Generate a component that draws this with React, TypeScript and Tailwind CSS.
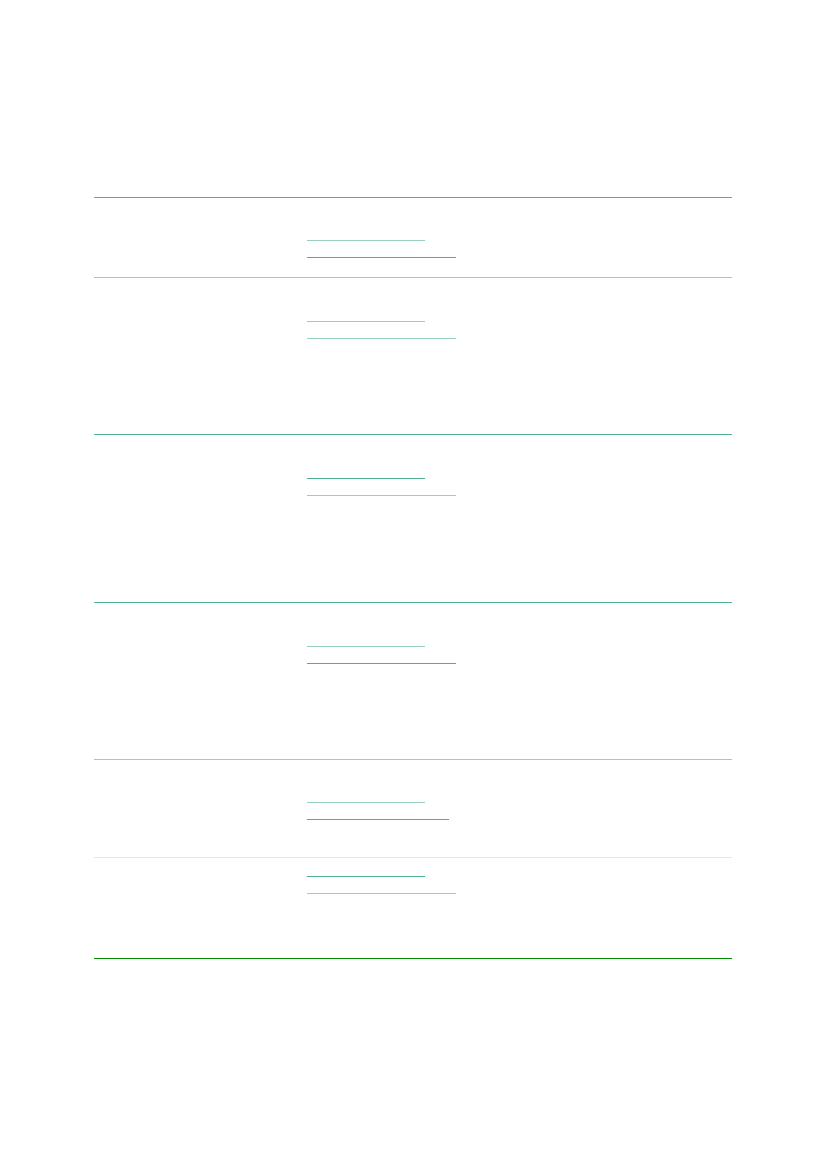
import React from "react"

type Row = {
  h: string
  pt: string
  border: string
  first: string
  second: string
  secondW: string
}

const rows: Row[] = [
  { h: "h-[80px]", pt: "pt-[42px]", border: "border-[#97cfbd]", first: "bg-[#97cfbd]", second: "bg-[#52ae95]", secondW: "w-[149px]" },
  { h: "h-[157px]", pt: "pt-[43px]", border: "border-[#52ae95]", first: "bg-[#97cfbd]", second: "bg-[#97cfbd]", secondW: "w-[149px]" },
  { h: "h-[168px]", pt: "pt-[43px]", border: "border-[#52ae95]", first: "bg-[#52ae95]", second: "bg-[#97cfbd]", secondW: "w-[149px]" },
  { h: "h-[157px]", pt: "pt-[43px]", border: "border-[#97cfbd]", first: "bg-[#97cfbd]", second: "bg-[#52ae95]", secondW: "w-[149px]" },
  { h: "h-[98px]", pt: "pt-[42px]", border: "border-[#e6e6e6]", first: "bg-[#97cfbd]", second: "bg-[#52ae95]", secondW: "w-[142px]" },
  { h: "h-[101px]", pt: "pt-[18px]", border: "border-[#008a00]", first: "bg-[#52ae95]", second: "bg-[#97cfbd]", secondW: "w-[149px]" },
]

export default function App() {
  return (
    <div className="min-h-screen bg-white pt-[197px] pl-[94px]">
      {/* table with empty link cells */}
      <div className="w-[638px] border-t border-[#52ae95]">
        {rows.map((r, i) => (
          <div key={i} className={`flex border-b ${r.h} ${r.border}`}>
            <div className="w-[192px] shrink-0" />
            <div className={`flex flex-col pl-[21px] ${r.pt}`}>
              <div className={`h-px w-[118px] ${r.first}`} />
              <div className={`mt-[16px] h-px ${r.secondW} ${r.second}`} />
            </div>
          </div>
        ))}
      </div>
    </div>
  )
}
